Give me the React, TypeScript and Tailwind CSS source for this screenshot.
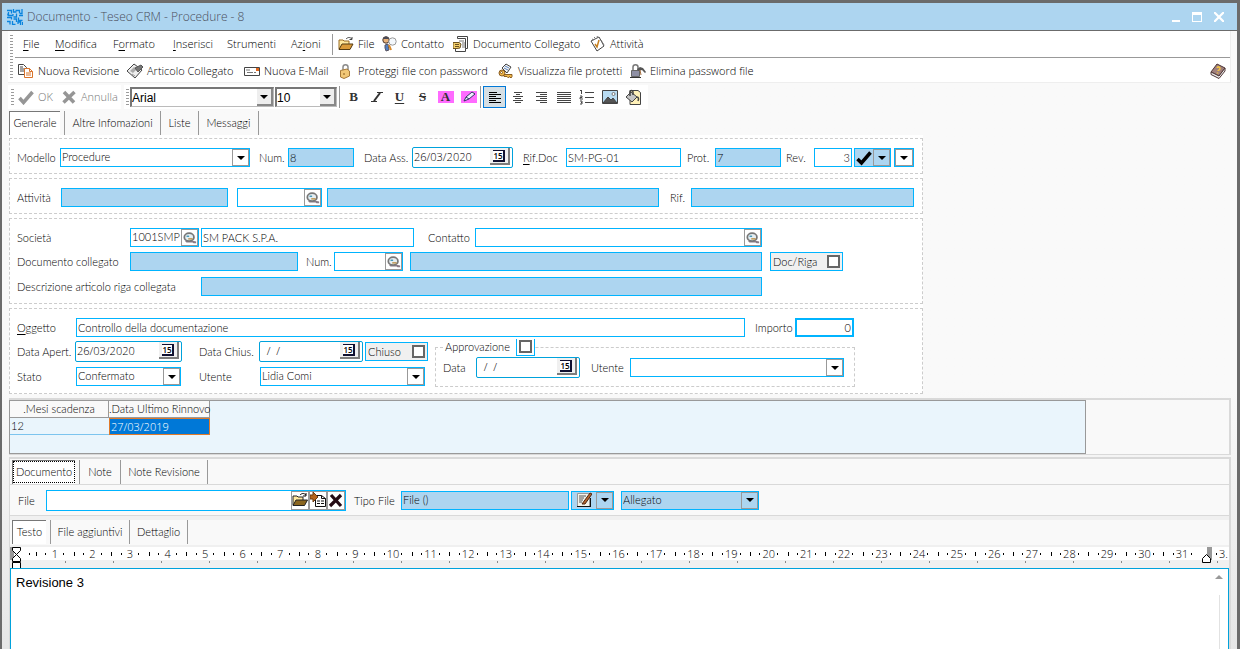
import React, { useState } from 'react';

const formText = "font-['Lato','Open_Sans',sans-serif] text-[11px] leading-4 text-black";
const label = `shrink-0 whitespace-nowrap pt-px ${formText}`;
const box = `h-[19px] min-w-0 border border-[#00b4ff] ${formText} outline-none`;

function Svg({ children, className = 'size-4' }: { children: React.ReactNode; className?: string }) {
  return (
    <svg viewBox="0 0 16 16" className={`shrink-0 ${className}`} fill="none" stroke="#444" strokeWidth="1" aria-hidden="true">
      {children}
    </svg>
  );
}

const Caret = () => (
  <svg viewBox="0 0 8 4" className="h-1 w-2" aria-hidden="true"><path d="M0 0h8L4 4z" fill="#000" /></svg>
);

const icons = {
  logo: (
    <Svg className="size-4">
      <path d="M0 1.500h4.500v3M6.500 0v3h3M8.500 1.500h4v3M15 0v4.500h-2M1.500 3v3.500h5M9.500 4.500V8h-3M12 6.500h4M0 8.500h4.500v2M6.500 10h3v3M11.500 8.500v3h4M0 12.500h3v3M5.500 12v3.500h3M11 15v-2h2.500v3M15.500 13v3M0 4.500v2M6 5v1" stroke="#0a84dd" strokeWidth="1.300" />
    </Svg>
  ),
  open: (
    <Svg>
      <path d="M1 13V4h4l1 1h5v3" fill="#ffe9a0" stroke="#9a6a20" />
      <path d="M1 13.500 4 8h11l-3 5.500z" fill="#d99a3a" stroke="#533a12" />
      <path d="M8 3c2-2 4-2 6 0M14 1v2.500h-2.500" />
    </Svg>
  ),
  contact: (
    <Svg>
      <circle cx="5" cy="4" r="3.200" fill="#e9b27a" stroke="#4c3a30" />
      <path d="M2 3C2 1 4 .5 5.500.5S8 2 8 3" fill="#4a4a55" stroke="none" />
      <path d="m4 9 3-1 1 6-3 1-1-3z" fill="#4f7fc4" stroke="#5a5560" />
      <circle cx="11.500" cy="5.500" r="3.700" fill="#f4f8fc" stroke="#999" />
      <path d="m8 9 2 5" stroke="#d98a2a" strokeWidth="2" />
    </Svg>
  ),
  linkedDoc: (
    <Svg>
      <path d="M4.500 2.500v-2h10v12h-2v3h-10v-3" fill="#fff" />
      <path d="M12.500 12.500v-10h-8" />
      <path d="M6 5h5M9 7h3M9 9h3M9 11h3" stroke="#777" />
      <path d="M0 6.500h6l2 1.500-1 4-3 .5H0z" fill="#f4cf6b" stroke="#6b5220" />
      <path d="M2 8.500h4M2 10.500h4" stroke="#6b5220" />
    </Svg>
  ),
  activity: (
    <Svg>
      <path d="m1 5 8-4 5 9-7 5z" fill="#fff" />
      <path d="m2 3 2 1m0-3 2 2m1-3 1 2M11 4l3 5" stroke="#777" />
      <path d="m5 8 2 3 2-7" stroke="#c57f20" strokeWidth="1.500" />
    </Svg>
  ),
  revision: (
    <Svg>
      <path d="M.5 1.500h5l3 3v7h-8zM2 4h3M2 6h5M2 8h5" fill="#fff" />
      <path d="M6.500 5.500h5l3 3v6h-8z" fill="#fff" stroke="#d9742b" />
      <path d="M11.500 5.500v3h3M8 10h5M8 12h5" stroke="#d9742b" />
    </Svg>
  ),
  article: (
    <Svg>
      <path d="m0 8 7-7 8 6-7 8z" fill="#eee" />
      <path d="m3 8 4-4 3 2-4 4z" fill="#aaa" stroke="none" />
      <path d="m8 5 6-3 2 2-5 5z" fill="#777" stroke="#555" />
      <path d="m5 11 3 2" stroke="#999" />
    </Svg>
  ),
  mail: (
    <Svg>
      <path d="M.5 4.500h15v8H.5z" fill="#fff" />
      <path d="M2 7h4M3 9.500h6M10 9.500h2" stroke="#777" />
      <path d="M12 5h3v3h-3z" fill="#e0661c" stroke="none" />
    </Svg>
  ),
  lock: (
    <Svg>
      <path d="M5 8V4c0-3 5-3 5 0v4" stroke="#8a8a8a" strokeWidth="1.500" />
      <path d="M2.500 7.500 9 6l2.500 2v5L6 15.500 2.500 14z" fill="#f2c877" stroke="#a5793a" />
      <path d="M6 10v2" stroke="#8a5c20" />
    </Svg>
  ),
  viewLock: (
    <Svg>
      <path d="m4 5 4-4 5 3-4 6z" fill="#f4f4f4" />
      <path d="m6 5 4 2M7 3l4 2" stroke="#5b84c0" />
      <circle cx="4" cy="10" r="3" fill="#f0b84a" stroke="#8a5c20" />
      <circle cx="3.500" cy="9.500" r="1" fill="#fff" stroke="#8a5c20" />
      <path d="M6 11.500h8v2l-1 1.500-1.500-1.500-1 1.500L9 13.500H6z" fill="#f0b84a" stroke="#8a5c20" />
    </Svg>
  ),
  removeLock: (
    <Svg>
      <path d="M3 8V4c0-3 5-3 5 0v3" stroke="#777" strokeWidth="1.500" />
      <path d="M1.500 7.500h8v6h-8z" fill="#8f90a5" stroke="#666" />
      <path d="M0 14.500h11" stroke="#333" />
      <path d="m7 6 3-2 3 1 3 4-1 1-3-3-4 1z" fill="#555" stroke="none" />
      <path d="m10 7 1 5" stroke="#a36c3c" />
    </Svg>
  ),
  book: (
    <Svg>
      <path d="m1 9 6-8 8 4-6 8z" fill="#a0807c" stroke="#4d3434" />
      <path d="m1 9 8 4 6-8v3l-6 7.500-8-4z" fill="#eee" stroke="#4d3434" />
      <path d="M7 5c1-2 3-1 3 .5S8 7 8 8M7.500 9.500v1" stroke="#f5c542" strokeWidth="1.500" />
    </Svg>
  ),
  ok: <Svg><path d="m1.500 9 4 4.500L14.500 3" stroke="#969696" strokeWidth="3.500" /></Svg>,
  cancel: <Svg><path d="m3 3 10 10.500M13.500 3 2.500 13.500" stroke="#969696" strokeWidth="3.500" /></Svg>,
  alignLeft: <Svg><path d="M2 3.500h8M2 5.500h12M2 7.500h7M2 9.500h12M2 11.500h7M2 13.500h12" stroke="#000" /></Svg>,
  alignCenter: <Svg><path d="M4 3.500h8M6 5.500h4M3 7.500h10M5 9.500h6M3 11.500h10M5 13.500h6" /></Svg>,
  alignRight: <Svg><path d="M3 3.500h11M7 5.500h7M3 7.500h11M7 9.500h7M3 11.500h11M7 13.500h7" /></Svg>,
  justify: <Svg><path d="M1 3.500h14M1 5.500h14M1 7.500h14M1 9.500h14M1 11.500h14M1 13.500h14" /></Svg>,
  list: (
    <Svg>
      <path d="M6 3.500h9M6 8.500h9M6 13.500h9M2.500 1v4M1 1.500h1M1 7h2v1.500H1v1.500h3M1 12h2v3H1m1-1.500h1" />
    </Svg>
  ),
  picture: (
    <Svg>
      <path d="M.5 1.500h15v13H.5z" fill="#b9dcf2" />
      <path d="m1 14 5-6 3 3 2-2 4 5z" fill="#555" />
      <circle cx="11.500" cy="5" r="1.500" fill="#fff" stroke="#777" />
    </Svg>
  ),
  bucket: (
    <Svg>
      <path d="M5 1.500h8l2.500 2v12H5z" fill="#fff1b8" />
      <path d="m1 8 5-5 6 5-5 5z" fill="#c5c5c5" />
      <path d="M5 7V3c0-2 3-2 3 0v3M12 8c1.500 0 2 2 1 4" strokeWidth="1.500" />
    </Svg>
  ),
  search: (
    <Svg className="size-[14px]">
      <path d="M2 11h9l4 1v2h-3l-1-1H4z" fill="#8a7a86" stroke="none" />
      <ellipse cx="7" cy="7" rx="5.500" ry="4.500" fill="#e5eef2" stroke="#777" strokeWidth="2" />
      <path d="M4 6h3" stroke="#3a8fb0" strokeWidth="1.500" />
      <path d="M6 9h5" stroke="#b98a3c" strokeWidth="1.500" />
    </Svg>
  ),
  check: <Svg><path d="m1.500 9 4 4L14.500 2.500" stroke="#000" strokeWidth="3.500" /></Svg>,
  openFile: (
    <Svg>
      <path d="M1 13V4h4l1 1h5v3" fill="#ffe9a0" stroke="#222" />
      <path d="M1 13.500 4 8h11.500l-3 5.500z" fill="#8a651e" stroke="#222" />
      <path d="M8 3c2-2 4-2 6 0M14 1v3h-3" stroke="#000" />
    </Svg>
  ),
  importFile: (
    <Svg>
      <path d="M5.500 3.500h6l4 3v8h-10z" fill="#fff" stroke="#111" />
      <path d="M11.500 3.500v3h4M7 9h3M11 9h3M7 11.500h3M11 11.500h3" stroke="#111" />
      <path d="M0 3h3V0l5 5-5 5V7H0z" fill="#b5651d" stroke="#6b3a10" />
    </Svg>
  ),
  deleteFile: <Svg><path d="m3 3 10 11M13 3 2 14" stroke="#230a14" strokeWidth="3.200" /></Svg>,
  edit: (
    <Svg>
      <path d="M1.500 1.500h12v13h-12z" fill="#f3f3ea" stroke="#999" />
      <path d="M1 14.500h14M14.500 6v9" stroke="#111" />
      <path d="M3 4h7M3 6h5M3 8h4M3 10h3" stroke="#555" />
      <path d="m6 12 8-11 2 1-7 10z" fill="#b5652c" stroke="#4a2410" />
    </Svg>
  ),
  italic: <Svg><path d="M8 3.500h6M2 12.500h6" stroke="#333" /><path d="m11 4-6 8" stroke="#333" strokeWidth="2" /></Svg>,
};

function Grip({ className = '' }: { className?: string }) {
  return (
    <svg className={`w-[3px] shrink-0 self-stretch ${className}`} aria-hidden="true">
      <defs>
        <pattern id="grip" width="3" height="3" patternUnits="userSpaceOnUse">
          <rect width="3" height="1" fill="#9b9b9b" />
        </pattern>
      </defs>
      <rect width="100%" height="100%" fill="url(#grip)" />
    </svg>
  );
}

function Access({ text, at }: { text: string; at?: number }) {
  if (at === undefined) return <>{text}</>;
  return (
    <>
      {text.slice(0, at)}
      <span className="underline underline-offset-2">{text[at]}</span>
      {text.slice(at + 1)}
    </>
  );
}

function ToolButton({ icon, text, width }: { icon: React.ReactNode; text: string; width: string }) {
  return (
    <button type="button" className={`flex shrink-0 items-center gap-1 whitespace-nowrap ${width}`}>
      {icon}
      <span>{text}</span>
    </button>
  );
}

function TextField({ id, name, value = '', className = '', blue = false }: {
  id?: string; name?: string; value?: string; className?: string; blue?: boolean;
}) {
  return (
    <input
      id={id}
      aria-label={name}
      defaultValue={value}
      readOnly={blue}
      className={`${box} px-px pb-px ${blue ? 'bg-[#add5f0]' : 'bg-white'} ${className}`}
    />
  );
}

function SelectField({ id, name, options, className = '', blue = false }: {
  id?: string; name?: string; options: string[]; className?: string; blue?: boolean;
}) {
  return (
    <div className={`${box} flex pl-px ${blue ? 'bg-[#add5f0]' : 'bg-white'} ${className}`}>
      <select id={id} aria-label={name} className="min-w-0 flex-1 appearance-none bg-transparent pb-px outline-none">
        {options.map(o => <option key={o}>{o}</option>)}
      </select>
      <span className="pointer-events-none flex w-[17px] shrink-0 items-center justify-center border border-[#999]">
        <Caret />
      </span>
    </div>
  );
}

function SearchField({ id, name, value = '', className = '' }: {
  id?: string; name: string; value?: string; className?: string;
}) {
  return (
    <div className={`${box} flex bg-white pl-px ${className}`}>
      <input id={id} aria-label={name} defaultValue={value} className="min-w-0 flex-1 pb-px outline-none" />
      <button type="button" aria-label={`Cerca ${name}`} className="flex w-[17px] shrink-0 items-center justify-center border border-[#999]">
        {icons.search}
      </button>
    </div>
  );
}

function DateField({ id, value, className = '' }: { id: string; value: string; className?: string }) {
  return (
    <div className={`flex h-[21px] rounded-xs border border-[#00a2dc] bg-white pl-px text-[11px] leading-4 text-black ${className}`}>
      <input id={id} defaultValue={value} className="min-w-0 flex-1 pb-[2px] outline-none" />
      <button type="button" aria-label="Calendario" className="mr-[2px] mb-[2px] flex w-5 shrink-0 items-center justify-center border-r-2 border-b-2 border-[#7d7d7d] bg-[#f0f0f0]">
        <span className="h-3 w-3 border-t border-r-2 border-b-2 border-[#101030] bg-white text-[8px] leading-[9px] font-semibold">15</span>
      </button>
    </div>
  );
}

function CheckField({ text, className = '' }: { text: string; className?: string }) {
  return (
    <label className={`${box} flex items-center justify-between bg-[#f0f0f0] pl-[2px] ${className}`}>
      {text}
      <input type="checkbox" className="mr-[2px] size-[13px] appearance-none border-2 border-[#666] bg-white checked:bg-[#666]" />
    </label>
  );
}

function Tabs({ tabs, focus = false }: { tabs: { text: string; width: string }[]; focus?: boolean }) {
  const [active, setActive] = useState(0);
  return (
    <div role="tablist" className={`flex h-6 ${formText}`}>
      {tabs.map((t, i) => (
        <button
          key={t.text}
          type="button"
          role="tab"
          aria-selected={i === active}
          onClick={() => setActive(i)}
          className={`flex shrink-0 items-center justify-center whitespace-nowrap ${t.width} ${
            i === active
              ? 'mr-1 border-t border-l border-[#777] bg-white pb-px'
              : 'border-r border-[#999]'
          } ${i === active + 1 ? 'border-l' : ''}`}
        >
          {focus && i === active
            ? <span className="border border-dotted border-black px-[2px] leading-5">{t.text}</span>
            : t.text}
        </button>
      ))}
    </div>
  );
}

const menus = [
  { text: 'File', at: 0, width: 'w-8' },
  { text: 'Modifica', at: 0, width: 'w-[58px]' },
  { text: 'Formato', at: 1, width: 'w-[60px]' },
  { text: 'Inserisci', at: 0, width: 'w-[54px]' },
  { text: 'Strumenti', width: 'w-16' },
  { text: 'Azioni', at: 2, width: 'w-[41px]' },
];

const links = [
  { text: 'File', icon: icons.open, width: 'w-[43px]' },
  { text: 'Contatto', icon: icons.contact, width: 'w-[72px]' },
  { text: 'Documento Collegato', icon: icons.linkedDoc, width: 'w-[137px]' },
  { text: 'Attività', icon: icons.activity, width: 'w-16' },
];

const commands = [
  { text: 'Nuova Revisione', icon: icons.revision, width: 'w-[109px]' },
  { text: 'Articolo Collegato', icon: icons.article, width: 'w-[117px]' },
  { text: 'Nuova E-Mail', icon: icons.mail, width: 'w-[94px]' },
  { text: 'Proteggi file con password', icon: icons.lock, width: 'w-40' },
  { text: 'Visualizza file protetti', icon: icons.viewLock, width: 'w-[132px]' },
  { text: 'Elimina password file', icon: icons.removeLock, width: 'w-32' },
];

const formats = [
  { name: 'Grassetto', icon: <span className="font-bold">B</span> },
  { name: 'Corsivo', icon: icons.italic },
  { name: 'Sottolineato', icon: <span className="underline underline-offset-2">U</span> },
  { name: 'Barrato', icon: <span className="line-through">S</span> },
  { name: 'Colore testo', icon: <span className="h-3 w-4 bg-[#ff6bff] leading-3 font-bold">A</span> },
  {
    name: 'Evidenziatore',
    icon: (
      <span className="h-3 w-4 bg-[#ff6bff]">
        <svg viewBox="0 0 16 12" className="h-3 w-4" aria-hidden="true">
          <path d="m3 10 2-4 6-5 3 2-6 5z" fill="#eef" stroke="#333a66" />
          <path d="m5 6 3 2" stroke="#333a66" />
        </svg>
      </span>
    ),
  },
];

const paragraphs = [
  { name: 'Allinea al centro', icon: icons.alignCenter },
  { name: 'Allinea a destra', icon: icons.alignRight },
  { name: 'Giustifica', icon: icons.justify },
  { name: 'Elenco numerato', icon: icons.list },
  { name: 'Immagine', icon: icons.picture },
  { name: 'Sfondo', icon: icons.bucket },
];

const group = 'border border-dashed border-[#ccc] pl-[7px] pr-2';

function TitleBar() {
  return (
    <header className="flex h-7 items-center border-b border-[#6b6b6b] bg-[#add5f0] pl-[5px]">
      {icons.logo}
      <h1 className="ml-1 flex-1 text-[12px] font-light text-[#4b4f5c]">Documento - Teseo CRM - Procedure - 8</h1>
      <div className="flex items-center gap-3 pr-[13px]">
        <button type="button" aria-label="Riduci a icona" className="flex h-[10px] w-2 items-end"><span className="h-[2px] w-full bg-white" /></button>
        <button type="button" aria-label="Ingrandisci" className="h-[10px] w-[10px] border border-t-[3px] border-white" />
        <button type="button" aria-label="Chiudi">
          <svg viewBox="0 0 10 10" className="size-[10px]" stroke="#fff" strokeWidth="2.200" aria-hidden="true"><path d="m0 0 10 10M10 0 0 10" /></svg>
        </button>
      </div>
    </header>
  );
}

function FontBox({ name, text, width }: { name: string; text: string; width: string }) {
  return (
    <div className={`ml-px flex h-5 shrink-0 border border-t-2 border-l-2 border-[#777] border-r-[#bbb] border-b-[#bbb] bg-white ${width}`}>
      <select aria-label={name} className="min-w-0 flex-1 appearance-none font-['Liberation_Sans',sans-serif] text-[12px] leading-4 font-normal text-black outline-none">
        <option>{text}</option>
      </select>
      <span className="pointer-events-none flex w-4 items-center justify-center border-r-2 border-b-2 border-[#888] bg-[#eee]"><Caret /></span>
    </div>
  );
}

function Toolbars() {
  return (
    <div className="text-[11px] text-black">
      <div className="mr-[6px] ml-[6px] flex h-[52px] border-r border-b border-[#eee] bg-white pl-[2px]">
        <Grip className="my-1" />
        <div className="ml-[2px] flex-1">
          <nav className="flex h-[27px] items-center border-b border-[#999] pl-2">
            {menus.map(m => (
              <button key={m.text} type="button" className={`shrink-0 text-left ${m.width}`}>
                <Access text={m.text} at={m.at} />
              </button>
            ))}
            <span className="mr-[5px] h-[21px] w-px bg-[#999]" />
            {links.map(l => <ToolButton key={l.text} {...l} />)}
          </nav>
          <div className="flex h-6 items-center pt-[2px] pl-[3px]">
            {commands.map(c => <ToolButton key={c.text} {...c} />)}
            <button type="button" aria-label="Guida" className="mr-1 ml-auto">{icons.book}</button>
          </div>
        </div>
      </div>

      <div className="mt-[2px] ml-[6px] flex h-6 gap-[3px]">
        <div className="flex w-[113px] items-center bg-white pl-[3px] text-[#777]">
          <Grip className="my-1" />
          <span className="w-1" />
          <ToolButton icon={icons.ok} text="OK" width="w-[43px]" />
          <ToolButton icon={icons.cancel} text="Annulla" width="w-14" />
        </div>
        <div className="flex w-[524px] items-center bg-white pl-[2px]">
          <Grip className="my-1" />
          <FontBox name="Carattere" text="Arial" width="w-36" />
          <FontBox name="Dimensione" text="10" width="w-[62px]" />
          <span className="mr-[2px] ml-[2px] h-[22px] w-px bg-[#999]" />
          {formats.map(f => (
            <button key={f.name} type="button" aria-label={f.name} className="flex w-[23px] justify-center font-['Liberation_Serif',serif] text-[13px] leading-4 font-semibold text-[#333]">
              {f.icon}
            </button>
          ))}
          <span className="mr-[2px] h-[22px] w-px bg-[#999]" />
          <button type="button" aria-label="Allinea a sinistra" className="flex h-[22px] w-[23px] items-center justify-center border border-[#0078d7] bg-[#d6dfe4]">
            {icons.alignLeft}
          </button>
          {paragraphs.map(p => (
            <button key={p.name} type="button" aria-label={p.name} className="flex w-[23px] justify-center">{p.icon}</button>
          ))}
        </div>
      </div>
    </div>
  );
}

function Form() {
  return (
    <div className="flex w-full max-w-[914px] flex-col gap-1 bg-white pt-[3px]">
      <div className={`${group} flex h-9 items-center pt-[3px]`}>
        <label htmlFor="modello" className={`${label} w-[43px]`}>Modello</label>
        <SelectField id="modello" options={['Procedure']} className="w-[190px]" />
        <label htmlFor="num" className={`${label} ml-[9px] w-[29px]`}>Num.</label>
        <TextField id="num" value="8" blue className="w-[66px]" />
        <label htmlFor="dataAss" className={`${label} ml-[10px] w-12`}>Data Ass.</label>
        <DateField id="dataAss" value="26/03/2020" className="w-[101px]" />
        <label htmlFor="rifDoc" className={`${label} ml-[10px] w-[43px]`}><Access text="Rif.Doc" at={0} /></label>
        <TextField id="rifDoc" value="SM-PG-01" className="w-[115px]" />
        <label htmlFor="prot" className={`${label} ml-[6px] w-7`}>Prot.</label>
        <TextField id="prot" value="7" blue className="w-[66px]" />
        <label htmlFor="rev" className={`${label} ml-[5px] w-7`}>Rev.</label>
        <TextField id="rev" value="3" className="w-[38px] text-right" />
        <button type="button" aria-label="Stato revisione" className={`${box} ml-[2px] flex w-[37px] items-center justify-between bg-[#add5f0] pl-px`}>
          {icons.check}
          <span className="flex h-full w-[17px] items-center justify-center border border-[#999]"><Caret /></span>
        </button>
        <button type="button" aria-label="Altre revisioni" className={`${box} ml-[3px] flex w-5 bg-white`}>
          <span className="flex h-full w-full items-center justify-center border border-[#999]"><Caret /></span>
        </button>
      </div>

      <div className={`${group} flex h-9 items-center pt-[3px]`}>
        <label htmlFor="attivita" className={`${label} w-11`}>Attività</label>
        <TextField id="attivita" blue className="w-[167px]" />
        <SearchField name="attività" className="ml-[9px] w-[85px]" />
        <TextField name="Descrizione attività" blue className="ml-[5px] flex-1" />
        <label htmlFor="rif" className={`${label} ml-[11px] w-[21px]`}>Rif.</label>
        <TextField id="rif" blue className="w-[223px]" />
      </div>

      <div className={`${group} pt-[9px] pb-[7px]`}>
        <div className="flex items-center">
          <label htmlFor="societa" className={`${label} w-[113px]`}>Società</label>
          <SearchField id="societa" name="società" value="1001SMP" className="w-[69px]" />
          <TextField name="Ragione sociale" value="SM PACK S.P.A." className="ml-[2px] w-[213px]" />
          <label htmlFor="contatto" className={`${label} ml-[14px] w-[47px]`}>Contatto</label>
          <SearchField id="contatto" name="contatto" className="w-[287px]" />
        </div>
        <div className="mt-[5px] flex items-center">
          <label htmlFor="docColl" className={`${label} w-[113px]`}>Documento collegato</label>
          <TextField id="docColl" blue className="w-[168px]" />
          <label htmlFor="numColl" className={`${label} ml-2 w-7`}>Num.</label>
          <SearchField id="numColl" name="documento" className="w-[69px]" />
          <TextField name="Descrizione documento" blue className="ml-[7px] w-[352px]" />
          <CheckField text="Doc/Riga" className="ml-2 w-[73px]" />
        </div>
        <div className="mt-[6px] flex items-center">
          <label htmlFor="descr" className={`${label} w-[184px]`}>Descrizione articolo riga collegata</label>
          <TextField id="descr" blue className="w-[561px]" />
        </div>
      </div>

      <div className={`${group} h-[86px] pt-[9px]`}>
        <div className="flex items-center">
          <label htmlFor="oggetto" className={`${label} w-[59px]`}><Access text="Oggetto" at={0} /></label>
          <TextField id="oggetto" value="Controllo della documentazione" className="w-[669px]" />
          <label htmlFor="importo" className={`${label} ml-[10px] w-10`}>Importo</label>
          <TextField id="importo" value="0" className="w-[59px] border-2 text-right" />
        </div>
        <div className="flex">
          <div className="mt-1 flex w-[418px] flex-col gap-[5px]">
            <div className="flex items-center">
              <label htmlFor="apert" className={`${label} w-[58px]`}>Data Apert.</label>
              <DateField id="apert" value="26/03/2020" className="w-[107px]" />
              <label htmlFor="chius" className={`${label} ml-[17px] w-[60px]`}>Data Chius.</label>
              <DateField id="chius" value="  /  /" className="w-[104px]" />
              <CheckField text="Chiuso" className="ml-[2px] w-[63px]" />
            </div>
            <div className="flex items-center">
              <label htmlFor="stato" className={`${label} w-[59px]`}>Stato</label>
              <SelectField id="stato" options={['Confermato']} className="w-[105px]" />
              <label htmlFor="utente" className={`${label} ml-[18px] w-[61px]`}>Utente</label>
              <SelectField id="utente" options={['Lidia Comi']} className="w-[165px]" />
            </div>
          </div>
          <fieldset className="mt-px h-[49px] w-[420px] border border-dashed border-[#ccc] px-[7px]">
            <legend className={`ml-[2px] ${formText}`}>
              <label className="flex h-[18px] items-center gap-[6px]">
                Approvazione
                <span className="flex h-[17px] w-[19px] items-center justify-center border border-t-0 border-[#00b4ff] bg-white">
                  <input type="checkbox" className="size-[13px] appearance-none border-2 border-[#666] bg-white checked:bg-[#666]" />
                </span>
              </label>
            </legend>
            <div className="mt-px flex items-center">
              <label htmlFor="appData" className={`${label} w-[33px]`}>Data</label>
              <DateField id="appData" value="  /  /" className="w-[104px]" />
              <label htmlFor="appUtente" className={`${label} ml-[11px] w-[39px]`}>Utente</label>
              <SelectField id="appUtente" options={['']} className="w-[214px]" />
            </div>
          </fieldset>
        </div>
      </div>
    </div>
  );
}

function Deadlines() {
  return (
    <div className="mt-1 h-[57px] shrink-0 border-t-2 border-r-2 border-b border-[#d9d9d9] bg-[#f9f9f9]">
      <div className="h-[54px] w-full max-w-[1077px] border border-[#999] bg-[#eaf5fc]">
        <table className={`w-[200px] table-fixed border-separate border-spacing-0 ${formText}`}>
          <thead>
            <tr className="bg-[#f9f9f9]">
              <th className="h-[17px] w-[99px] border-r border-b border-[#999] p-0 text-center font-light">.Mesi scadenza</th>
              <th className="border-r border-b border-[#999] p-0 text-center font-light whitespace-nowrap">.Data Ultimo Rinnovo</th>
            </tr>
          </thead>
          <tbody>
            <tr>
              <td className="h-[17px] border-b border-[#7cc4ee] p-0 pl-px">12</td>
              <td className="border border-[#e07a2a] bg-[#0078d7] p-0 pl-px font-['Open_Sans',sans-serif] leading-[15px] text-white">27/03/2019</td>
            </tr>
          </tbody>
        </table>
      </div>
    </div>
  );
}

function Attachment() {
  const btn = 'flex h-full w-[18px] shrink-0 items-center justify-center border border-[#999] bg-white';
  return (
    <div className="flex h-8 shrink-0 items-center border-t border-b border-[#d9d9d9] pl-2">
      <label htmlFor="file" className={`${label} w-7`}>File</label>
      <div className="flex h-[21px] w-[300px] border border-[#00b4ff] bg-white">
        <input id="file" className={`min-w-0 flex-1 px-[2px] outline-none ${formText}`} />
        <button type="button" aria-label="Apri" className={btn}>{icons.openFile}</button>
        <button type="button" aria-label="Importa" className={btn}>{icons.importFile}</button>
        <button type="button" aria-label="Elimina" className={btn}>{icons.deleteFile}</button>
      </div>
      <label htmlFor="tipo" className={`${label} ml-2 w-[47px]`}>Tipo File</label>
      <TextField id="tipo" value="File ()" blue className="w-[168px]" />
      <button type="button" aria-label="Modifica tipo" className={`${box} ml-[2px] flex w-[43px] items-center justify-between bg-[#add5f0] pl-1`}>
        {icons.edit}
        <span className="flex h-full w-[17px] items-center justify-center border border-[#999]"><Caret /></span>
      </button>
      <SelectField name="Allegato" options={['Allegato']} blue className="ml-[7px] w-[138px]" />
    </div>
  );
}

function Ruler() {
  const marks = Array.from({ length: 31 }, (_, i) => i + 1);
  const stops = Array.from({ length: 25 }, (_, i) => i);
  return (
    <div className="shrink-0 bg-[#f0f0f0] pt-[2px]">
      <div className="flex h-[13px] items-center bg-white text-[11px] leading-3 text-black">
        <svg viewBox="0 0 13 23" className="h-[23px] w-[13px] shrink-0 self-start" fill="#fff" stroke="#000" aria-hidden="true">
          <path d="M0 0h4v13H0z" fill="#999" stroke="none" />
          <path d="M2.500.5h8v3l-4 4-4-4zM2.500 14.500v-3l4-4 4 4v3zM2.500 15.500h8v6h-8z" />
        </svg>
        <span className="flex w-[13px] shrink-0 justify-center"><span className="h-[2px] w-px bg-black" /></span>
        {marks.map(n => (
          <div key={n} className="flex flex-1 items-center justify-between">
            <span className="h-1 w-px bg-black" />
            <span className="h-[2px] w-px bg-black" />
            <span className="flex w-0 justify-center">{n}</span>
            <span className="h-[2px] w-px bg-black" />
            <span className="w-px" />
          </div>
        ))}
        <svg viewBox="0 0 11 17" className="h-[17px] w-[11px] shrink-0 self-start" aria-hidden="true">
          <path d="M6 0h5v13H6z" fill="#999" />
          <path d="M1.500 15.500v-4l4-4 4 4v4z" fill="#fff" stroke="#000" />
        </svg>
        <span className="ml-1 h-[2px] w-px bg-black" />
        <span className="w-3 pl-[2px]">3.</span>
      </div>
      <div className="flex h-2 overflow-hidden pl-2">
        {stops.map(n => <span key={n} className="mt-px h-[2px] w-12 shrink-0 border-r border-[#888]" />)}
      </div>
    </div>
  );
}

export default function App() {
  return (
    <div className="flex h-screen flex-col overflow-hidden border-t-[3px] border-r-[3px] border-l-2 border-[#6b6b6b] bg-linear-to-b from-[#f9f9f9] from-60% to-[#e6e6e6] font-['Open_Sans',sans-serif] font-light">
      <TitleBar />
      <Toolbars />
      <main className="flex min-h-0 flex-1 flex-col pr-[6px] pl-[7px]">
        <div className="mt-[2px]">
          <Tabs tabs={[
            { text: 'Generale', width: 'w-[51px]' },
            { text: 'Altre Infomazioni', width: 'w-[97px]' },
            { text: 'Liste', width: 'w-[38px]' },
            { text: 'Messaggi', width: 'w-[60px]' },
          ]} />
        </div>
        <Form />
        <Deadlines />
        <div className="mt-[2px] flex min-h-0 flex-1 flex-col border-t-2 border-r-2 border-l border-[#d9d9d9] bg-[#f9f9f9]">
          <div className="pt-px pl-[2px]">
            <Tabs focus tabs={[
              { text: 'Documento', width: 'w-[63px]' },
              { text: 'Note', width: 'w-[42px]' },
              { text: 'Note Revisione', width: 'w-[87px]' },
            ]} />
          </div>
          <Attachment />
          <div className="border-t-4 border-[#f0f0f0] pb-px pl-[2px]">
            <Tabs tabs={[
              { text: 'Testo', width: 'w-[34px]' },
              { text: 'File aggiuntivi', width: 'w-20' },
              { text: 'Dettaglio', width: 'w-[58px]' },
            ]} />
          </div>
          <Ruler />
          <div className="flex min-h-0 flex-1 border border-b-0 border-[#00a2dc] bg-white">
            <textarea
              aria-label="Testo"
              defaultValue="Revisione 3"
              className="flex-1 resize-none px-[5px] py-[6px] font-['Liberation_Sans',sans-serif] text-[13px] leading-4 font-normal text-black outline-none"
            />
            <div className="flex w-[18px] flex-col items-center pt-[6px]">
              <svg viewBox="0 0 8 4" className="h-1 w-2" aria-hidden="true"><path d="M0 4h8L4 0z" fill="#999" /></svg>
              <span className="mt-4 w-px flex-1 bg-[#e2e2e2]" />
            </div>
          </div>
        </div>
      </main>
    </div>
  );
}
